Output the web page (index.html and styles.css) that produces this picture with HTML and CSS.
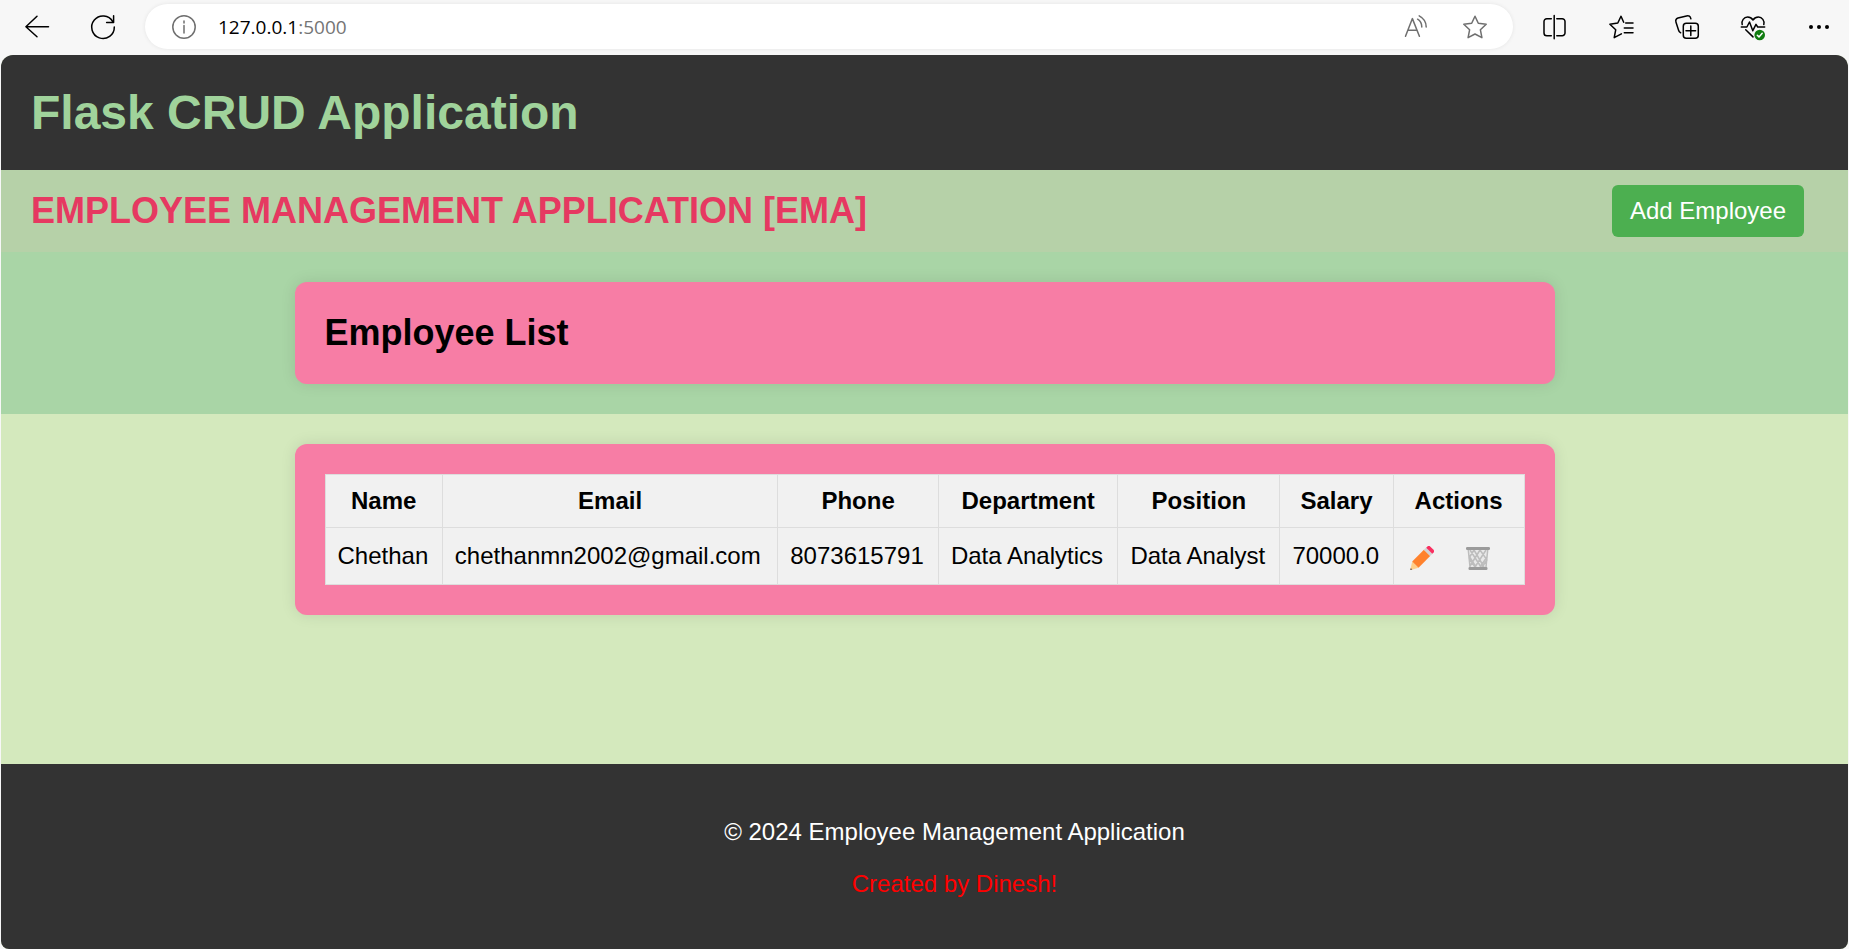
FILE: index.html
```html
<!DOCTYPE html>
<html lang="en">
<head>
<meta charset="utf-8">
<meta name="viewport" content="width=device-width, initial-scale=1">
<title>Flask CRUD Application</title>
<link rel="stylesheet" href="styles.css">
</head>
<body class="browser">
<div class="toolbar">
  <button class="tool" type="button" aria-label="Back">
    <svg class="icon" viewBox="0 0 24 24"><path d="M23.5 11.7H.9M12 1.2.9 11.7 12 21.8"/></svg>
  </button>
  <button class="tool" type="button" aria-label="Refresh">
    <svg class="icon" viewBox="0 0 24 24"><path d="M23.3 12A11.3 11.3 0 1 1 21.8 6.6M22.6 .8v6.8h-7"/></svg>
  </button>
  <div class="address">
    <button class="address-tool" type="button" aria-label="Site information">
      <svg class="icon icon-muted" viewBox="0 0 24 24"><circle cx="12" cy="12" r="11.2"/><path d="M12 10.5v7.5M12 6v2"/></svg>
    </button>
    <div class="url" role="textbox" tabindex="0" aria-label="Address">127.0.0.1<span class="port">:5000</span></div>
    <button class="address-tool" type="button" aria-label="Read aloud">
      <svg class="icon icon-muted" viewBox="0 0 24 24"><path d="M1.5 21.3 8.4 3.6l7 17.7M4.3 15.2h8.4M13.6 4.2c2.7 1.6 4.2 4.2 4.2 7.8M15.2.8c4.6 2.4 7 6.4 7 11.2"/></svg>
    </button>
    <button class="address-tool" type="button" aria-label="Add to favorites">
      <svg class="icon icon-muted" viewBox="0 0 24 24"><path d="m12 1.2 3.3 7.1 7.9 1-5.8 5.5 1.5 7.9L12 19l-6.900 3.700 1.500-7.900L.8 9.300l7.900-1z"/></svg>
    </button>
  </div>
  <button class="tool" type="button" aria-label="Split screen">
    <svg class="icon" viewBox="0 0 24 24"><path d="M8.300 3.700H3.800A2.800 2.800 0 0 0 1 6.500v11.400a2.800 2.800 0 0 0 2.800 2.800h4.500M13.800 3.700h5.400A2.800 2.800 0 0 1 22 6.500v11.400a2.800 2.800 0 0 1-2.800 2.800h-5.400M11.200 .4v23.400"/></svg>
  </button>
  <button class="tool" type="button" aria-label="Favorites">
    <svg class="icon" viewBox="0 0 24 24"><path d="M14.700 7.200 12 1.200 8.800 8 .9 9.300l5.800 5.500L5.200 22.700l7.200-3.900M16.700 8H24M15.300 12.900H24M15.300 17.700H24"/></svg>
  </button>
  <button class="tool" type="button" aria-label="Collections">
    <svg class="icon" viewBox="0 0 24 24"><rect x="8.300" y="8.200" width="15" height="15" rx="3"/><path d="M15.800 11v9.600M11 15.800h9.600M5.600 17.800C4.200 17.300 3.900 16.500 3.500 15L1 7.200C.4 5.200 1 3.700 3 3L11.500.9c2.400-.6 3.800.3 4.400 2.900"/></svg>
  </button>
  <button class="tool" type="button" aria-label="Browser essentials">
    <svg class="icon" viewBox="0 0 24 24"><path d="M1.200 9.600C.1 5.700 3 2 6.600 2 9 2 10.700 3.100 12 5c1.300-1.900 3-3 5.400-3 3.600 0 6.500 3.700 5.400 7.600M.3 12h5.600l2.600-5 3.300 8.700L15 9.300l1.700 2.700h7M4.700 14.700l7.300 7.200"/><circle class="badge" cx="18.700" cy="20" r="5.300"/><path class="badge-tick" d="m16.300 20.200 1.700 1.700 3.200-3.600"/></svg>
  </button>
  <button class="tool" type="button" aria-label="More">
    <svg class="icon icon-solid" viewBox="0 0 24 24"><circle cx="4" cy="12" r="2"/><circle cx="12" cy="12" r="2"/><circle cx="20" cy="12" r="2"/></svg>
  </button>
</div>

<div class="page">
  <header class="site-header">
    <h1 class="site-title">Flask CRUD Application</h1>
  </header>
  <nav class="app-bar">
    <h2 class="app-title">EMPLOYEE MANAGEMENT APPLICATION [EMA]</h2>
    <button class="add-button" type="button">Add Employee</button>
  </nav>
  <section class="band">
    <div class="card">
      <h2 class="card-title">Employee List</h2>
    </div>
  </section>
  <main class="content">
    <div class="card">
      <table class="employees">
        <thead>
          <tr><th>Name</th><th>Email</th><th>Phone</th><th>Department</th><th>Position</th><th>Salary</th><th>Actions</th></tr>
        </thead>
        <tbody>
          <tr>
            <td>Chethan</td><td>chethanmn2002@gmail.com</td><td>8073615791</td><td>Data Analytics</td><td>Data Analyst</td><td>70000.0</td>
            <td>
              <div class="actions">
                <a class="action" href="#edit" aria-label="Edit">
                  <svg class="emoji" viewBox="0 0 24 24">
                    <path fill="#ffcf8a" d="M2.200 15.500 8.500 21.800.2 24.200z"/>
                    <path fill="#6b5b58" d="M.8 22 2.300 23.500.100 24.200z"/>
                    <path fill="#ff822d" d="M2.200 15.500 13.900 3.800l6.300 6.300L8.500 21.800z"/>
                    <path fill="#d3d3d3" d="m13.900 3.800 2.300-2.300 6.300 6.300-2.300 2.300z"/>
                    <path fill="#f92f60" d="m16.200 1.700 1.500-1.500a1.600 1.600 0 0 1 2.200 0l3.900 3.900a1.600 1.600 0 0 1 0 2.200l-1.500 1.500z"/>
                  </svg>
                </a>
                <a class="action" href="#delete" aria-label="Delete">
                  <svg class="emoji" viewBox="0 0 24 24">
                    <path fill="#e9e9e9" d="M2 3h20l-1.800 19H3.800z"/>
                    <path fill="none" stroke="#bdbdbd" stroke-width="1.500" d="M2.300 4 4 21M21.700 4 20 21M8 4 3 12l6 9M8 4l10 17M14 4 4 20M14 4l7 10-5 7M20 4 9 21M4 4l11 17M21 11l-7 10M3 10l7 11"/>
                    <rect x="0" y="1" width="24" height="3" rx="1.200" fill="#9b9b9b"/>
                    <rect x="2.500" y="21" width="19" height="3" rx="1.200" fill="#9b9b9b"/>
                  </svg>
                </a>
              </div>
            </td>
          </tr>
        </tbody>
      </table>
    </div>
  </main>
  <footer class="site-footer">
    <p class="footer-line">© 2024 Employee Management Application</p>
    <p class="footer-line footer-credit">Created by Dinesh!</p>
  </footer>
</div>
</body>
</html>
```

FILE: styles.css
```css
* {
  box-sizing: border-box;
}

.browser {
  display: flex;
  flex-direction: column;
  min-height: 100vh;
  margin: 0;
  background: #f7f7f7;
  color: #000;
  font-family: "Liberation Sans", Arial, sans-serif;
  font-size: 24px;
  line-height: 28px;
}

/* Browser toolbar */
.toolbar {
  display: flex;
  align-items: center;
  gap: 18px;
  padding: 4px 6px 6px 13px;
}

.tool,
.address-tool {
  display: flex;
  align-items: center;
  justify-content: center;
  flex: none;
  padding: 0;
  border: 0;
  background: none;
}

.tool {
  width: 48px;
  height: 45px;
}

.icon {
  width: 24px;
  height: 24px;
  overflow: visible;
  fill: none;
  stroke: #000;
  stroke-width: 1.5;
  stroke-linecap: round;
  stroke-linejoin: round;
}

.icon-muted {
  stroke: #6f6f6f;
}

.icon-solid {
  fill: #000;
  stroke: none;
}

.badge {
  fill: #107c10;
  stroke: none;
}

.badge-tick {
  stroke: #fff;
}

.address {
  display: flex;
  align-items: center;
  flex: 1;
  gap: 22px;
  height: 45px;
  padding: 0 26px 0 27px;
  border-radius: 24px;
  background: #fff;
  box-shadow: 0 0 4px rgba(0, 0, 0, 0.08);
}

.address-tool + .address-tool {
  margin-left: 13px;
}

.url {
  flex: 1;
  font-family: "Open Sans", "Noto Sans", sans-serif;
  font-size: 19px;
}

.port {
  color: #757575;
}

/* Page */
.page {
  display: flex;
  flex-direction: column;
  flex: 1;
  margin: 0 1px;
  overflow: hidden;
  border-radius: 12px 12px 8px 8px;
  background: #d4e9bd;
}

.site-header {
  padding: 30px;
  background: #333;
}

.site-title {
  margin: 0;
  color: #a0d39b;
  font-size: 48px;
  line-height: 55px;
}

.app-bar {
  display: flex;
  align-items: center;
  justify-content: space-between;
  padding: 15px 44px 15px 30px;
  background: #b6d1a8;
}

.app-title,
.card-title {
  margin: 0;
  font-size: 36px;
  line-height: 42px;
}

.app-title {
  color: #e63961;
}

.add-button {
  padding: 12px 18px;
  border: 0;
  border-radius: 6px;
  background: #4caf50;
  color: #fff;
  font: inherit;
}

.band {
  padding: 30px;
  background: #a9d5a6;
}

.content {
  flex: 1;
  padding: 30px;
}

.card {
  max-width: 1260px;
  margin: 0 auto;
  padding: 30px;
  border-radius: 12px;
  background: #f77da5;
  box-shadow: 0 0 15px rgba(0, 0, 0, 0.1);
}

.employees {
  width: 100%;
  border-collapse: collapse;
  background: #f1f1f1;
}

.employees th,
.employees td {
  padding: 12px;
  border: 1px solid #ddd;
  white-space: nowrap;
}

.actions {
  display: flex;
  align-items: center;
  gap: 32px;
  height: 32px;
  padding: 3px 20px 0 4px;
}

.action {
  display: flex;
}

.emoji {
  width: 24px;
  height: 24px;
}

.site-footer {
  padding: 54px 0 51px 60px;
  background: #333;
  color: #fff;
  text-align: center;
}

.footer-line {
  margin: 0;
}

.footer-credit {
  margin-top: 24px;
  color: #f00;
}
```
